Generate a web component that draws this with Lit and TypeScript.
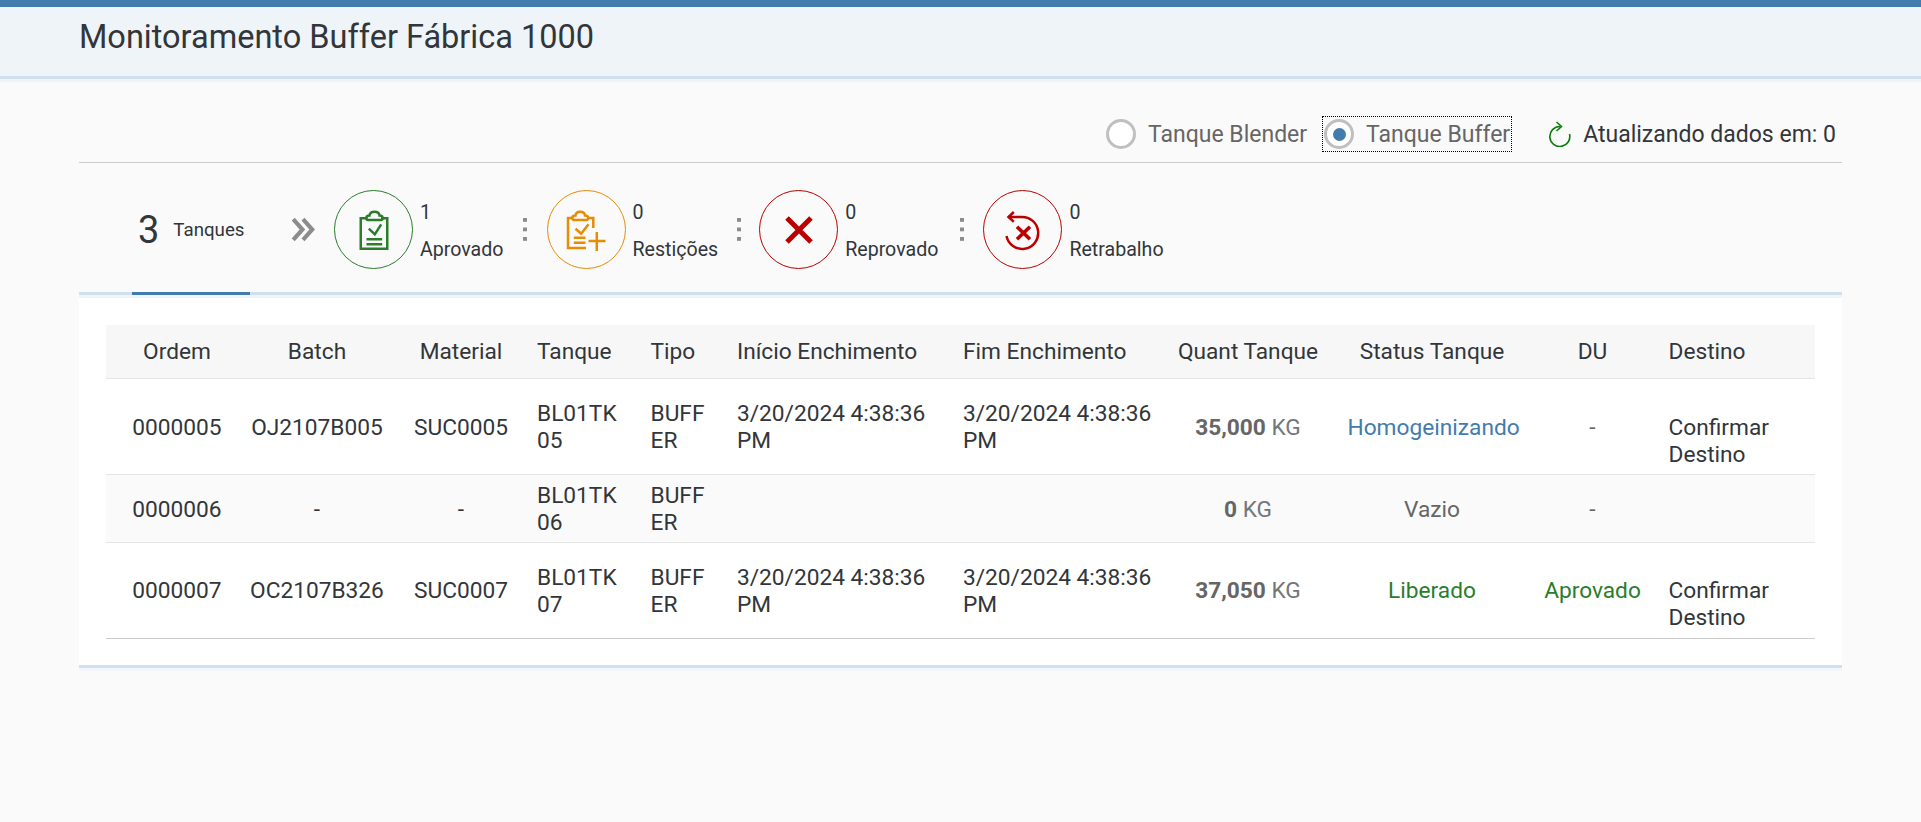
import { LitElement, html, css, svg } from 'lit';
import { customElement } from 'lit/decorators.js';

interface Row {
  ordem: string; batch: string; material: string; tanque: string; tipo: string;
  inicio: string; fim: string; quant: string; status: string; statusClass: string;
  du: string; duClass: string; destino: string;
}

const DATE = '3/20/2024 4:38:36 PM';

const ROWS: Row[] = [
  { ordem: '0000005', batch: 'OJ2107B005', material: 'SUC0005', tanque: 'BL01TK05', tipo: 'BUFFER', inicio: DATE, fim: DATE, quant: '35,000', status: 'Homogeinizando', statusClass: 'blue', du: '-', duClass: 'grey', destino: 'Confirmar Destino' },
  { ordem: '0000006', batch: '-', material: '-', tanque: 'BL01TK06', tipo: 'BUFFER', inicio: '', fim: '', quant: '0', status: 'Vazio', statusClass: 'grey', du: '-', duClass: 'grey', destino: '' },
  { ordem: '0000007', batch: 'OC2107B326', material: 'SUC0007', tanque: 'BL01TK07', tipo: 'BUFFER', inicio: DATE, fim: DATE, quant: '37,050', status: 'Liberado', statusClass: 'green', du: 'Aprovado', duClass: 'green', destino: 'Confirmar Destino' },
];

const CLIP = 'M16 12H29C31.500 12 31.500 7.500 27.500 7.500C27 2.500 18 2.500 17.500 7.500C13.500 7.500 13.500 12 16 12Z';

const ICONS = {
  aprovado: svg`
    <path d="M15.500 10.250H8.750V40.750H35.250V10.250H29" />
    <path d=${CLIP} />
    <path d="M16.800 20.700L22.800 26.300L29.200 16.300" />
    <path d="M14.500 31.300H30.200M14.500 36.300H30.200" />`,
  restricoes: svg`
    <path d="M9 10H4V40H22M24 10H29.300V20" />
    <path d="M10 12H22.500C25 12 25 7.500 21 7.500C20.500 2.500 12 2.500 11.500 7.500C7.500 7.500 7.500 12 10 12Z" />
    <path d="M11.500 20.700L17.200 25.700L24.500 16.300" />
    <path d="M9.800 29.700H21.500M9.800 34.700H21.500" />
    <path d="M24.500 33H41.500M32.800 24V43" />`,
  reprovado: svg`<path d="M3 3L27 27M27 3L3 27" />`,
  retrabalho: svg`
    <path d="M7.500 9H20A16 16 0 1 1 5.500 28" />
    <path d="M12.800 4L7.500 9L12.800 13.700" />
    <path class="thick" d="M16 18.700L29 31.300M29 18.700L16 31.300" />`,
};

@customElement('app-root')
export class AppRoot extends LitElement {
  static styles = css`
    :host {
      display: block;
      min-height: 822px;
      background: #fafafa;
      font-family: Roboto, "Noto Sans", sans-serif;
      color: #32363a;
    }

    /* ── Header ─────────────────────────────────────────── */
    .header {
      height: 69px;
      padding-left: 79px;
      background: #eff4f9;
      border-top: 7px solid #427cac;
      border-bottom: 3px solid #d1e0ee;
      box-shadow: 0 3px 0 #eff4f9;
      font-size: 32.500px;
      line-height: 61px;
    }

    /* ── Page ───────────────────────────────────────────── */
    .page {
      padding: 0 79px;
    }

    .toolbar {
      display: flex;
      align-items: center;
      justify-content: flex-end;
      height: 84px;
      padding-top: 27px;
      box-sizing: border-box;
      border-bottom: 1px solid #cccccc;
      font-size: 23px;
    }

    .radio {
      display: flex;
      align-items: center;
      height: 36px;
      box-sizing: border-box;
      padding: 0 1px 0 1px;
      border: 1px dotted transparent;
      color: #666666;
    }

    .radio.focused {
      border-color: #000000;
    }

    .radio-mark {
      width: 30px;
      height: 30px;
      box-sizing: border-box;
      margin-right: 12px;
      border: 3px solid #bfbfbf;
      border-radius: 50%;
      background: #ffffff;
      display: flex;
      align-items: center;
      justify-content: center;
    }

    .radio-mark i {
      width: 13px;
      height: 13px;
      border-radius: 50%;
      background: #427cac;
    }

    .radio-blender {
      margin-right: 13px;
    }

    .refresh {
      width: 23px;
      height: 26px;
      margin: 0 12px 0 36px;
      fill: none;
      stroke: #0a7d0a;
      stroke-width: 1.600;
    }

    .updating {
      margin-right: 6px;
    }

    /* ── Icon tab bar ───────────────────────────────────── */
    .tabs {
      display: flex;
      height: 129px;
      padding-left: 53px;
      border-bottom: 3px solid #d1e0ee;
    }

    .tab-total {
      position: relative;
      display: flex;
      align-items: center;
      width: 118px;
      height: 129px;
      padding-top: 4px;
      box-sizing: border-box;
    }

    .tab-total::after {
      content: '';
      position: absolute;
      left: 0;
      right: 0;
      bottom: -3px;
      height: 3px;
      background: #427cac;
    }

    .total-count {
      margin: 0 14px 0 6px;
      font-size: 38px;
    }

    .total-label {
      font-size: 18.700px;
    }

    .chevrons {
      width: 24px;
      height: 25px;
      margin: 54px 19px 0 41px;
      fill: none;
      stroke: #8c8c8c;
      stroke-width: 3.800;
    }

    .filter {
      display: flex;
      align-items: flex-start;
      padding-top: 27px;
    }

    .filter.reprovado {
      margin: 0 3px 0 -2px;
    }

    .filter.retrabalho {
      margin-left: -1px;
    }

    .circle {
      width: 79px;
      height: 79px;
      box-sizing: border-box;
      margin-right: 7px;
      border: 1px solid currentColor;
      border-radius: 50%;
      display: flex;
      align-items: center;
      justify-content: center;
    }

    .circle svg {
      width: 44px;
      height: 44px;
      fill: none;
      stroke: currentColor;
      stroke-width: 2.500;
    }

    .reprovado .circle svg {
      width: 30px;
      height: 30px;
      stroke-width: 5;
    }

    .circle svg .thick {
      stroke-width: 3.600;
    }

    .filter-text {
      padding-top: 11px;
      font-size: 19.600px;
      line-height: 24px;
    }

    .filter-count {
      margin-bottom: 13px;
    }

    .sep {
      width: 4px;
      height: 23px;
      margin: 55px 20px 0 19px;
      background: linear-gradient(#8c8c8c 4px, transparent 4px) 0 0 / 4px 9.500px;
    }

    /* ── Table ──────────────────────────────────────────── */
    .content {
      padding: 27px 27px 26px;
      background: #ffffff;
      border-top: 3px solid #eff4f9;
      border-bottom: 3px solid #d1e0ee;
      box-shadow: 0 3px 0 #f3f6fa;
    }

    table {
      width: 100%;
      border-collapse: separate;
      border-spacing: 0;
      table-layout: fixed;
      font-size: 22.700px;
      line-height: 27px;
    }

    col:nth-child(1) { width: 142px; }
    col:nth-child(2) { width: 138px; }
    col:nth-child(3) { width: 143px; }
    col:nth-child(4) { width: 113.500px; }
    col:nth-child(5) { width: 86.500px; }
    col:nth-child(6) { width: 226px; }
    col:nth-child(7) { width: 201.500px; }
    col:nth-child(8) { width: 183px; }
    col:nth-child(9) { width: 185px; }
    col:nth-child(10) { width: 136px; }

    th {
      height: 54px;
      box-sizing: border-box;
      padding: 0 8px;
      background: #f7f7f7;
      border-bottom: 1px solid #e5e5e5;
      font-weight: 400;
      text-align: left;
    }

    td {
      padding: 0 8px;
      border-bottom: 1px solid #e5e5e5;
      vertical-align: top;
      box-sizing: border-box;
    }

    tr.tall td {
      height: 96px;
      padding-top: 21px;
    }

    tr.short td {
      height: 68px;
      padding-top: 7px;
      background: #fafafa;
    }

    tbody tr:last-child td {
      border-bottom-color: #cccccc;
    }

    th.center,
    td.center {
      text-align: center;
    }

    tr.tall td.single {
      padding-top: 35px;
    }

    tbody tr:last-child td.single {
      padding-top: 34px;
    }

    tr.short td.single {
      padding-top: 21px;
    }

    td.batch {
      padding-left: 0;
      padding-right: 0;
    }

    th.material,
    td.material {
      padding-left: 15px;
    }

    .tanque,
    .tipo {
      word-break: break-all;
    }

    td.tanque {
      padding-right: 24px;
    }

    td.tipo {
      padding-right: 18px;
    }

    td.fim {
      padding-right: 2px;
    }

    .quant {
      color: #74777a;
    }

    .quant b {
      color: #666666;
      font-weight: 700;
    }

    .blue { color: #427cac; }
    .green { color: #2b7d2b; }
    .grey { color: #666666; }
  `;

  private _filter(key: keyof typeof ICONS, color: string, count: string, label: string, last = false) {
    const box = key === 'reprovado' ? 30 : 44;
    return html`
      <div class="filter ${key}">
        <div class="circle" style="color: ${color}">
          <svg viewBox="0 0 ${box} ${box}">${ICONS[key]}</svg>
        </div>
        <div class="filter-text">
          <div class="filter-count">${count}</div>
          <div>${label}</div>
        </div>
      </div>
      ${last ? '' : html`<div class="sep"></div>`}
    `;
  }

  render() {
    return html`
      <div class="header">Monitoramento Buffer Fábrica 1000</div>
      <div class="page">
        <div class="toolbar">
          <div class="radio radio-blender">
            <span class="radio-mark"></span>Tanque Blender
          </div>
          <div class="radio focused">
            <span class="radio-mark"><i></i></span>Tanque Buffer
          </div>
          <svg class="refresh" viewBox="0 0 23 26">
            <path d="M12 5.500A10 10 0 1 0 21.500 13" />
            <path d="M8.500 1L13.500 5.500L8.500 10" />
          </svg>
          <span class="updating">Atualizando dados em: 0</span>
        </div>
        <div class="tabs">
          <div class="tab-total">
            <span class="total-count">3</span>
            <span class="total-label">Tanques</span>
          </div>
          <svg class="chevrons" viewBox="0 0 22 23">
            <path d="M2 2L10.500 11.500L2 21M11 2L19.500 11.500L11 21" />
          </svg>
          ${this._filter('aprovado', '#2b7d2b', '1', 'Aprovado')}
          ${this._filter('restricoes', '#e78c07', '0', 'Restições')}
          ${this._filter('reprovado', '#bb0000', '0', 'Reprovado')}
          ${this._filter('retrabalho', '#bb0000', '0', 'Retrabalho', true)}
        </div>
        <div class="content">
          <table>
            <colgroup>
              <col /><col /><col /><col /><col /><col /><col /><col /><col /><col /><col />
            </colgroup>
            <thead>
              <tr>
                <th class="center">Ordem</th>
                <th class="center">Batch</th>
                <th class="center material">Material</th>
                <th>Tanque</th>
                <th>Tipo</th>
                <th>Início Enchimento</th>
                <th>Fim Enchimento</th>
                <th class="center">Quant Tanque</th>
                <th class="center">Status Tanque</th>
                <th class="center">DU</th>
                <th>Destino</th>
              </tr>
            </thead>
            <tbody>
              ${ROWS.map((r) => html`
                <tr class="${r.inicio ? 'tall' : 'short'}">
                  <td class="center single">${r.ordem}</td>
                  <td class="center single batch">${r.batch}</td>
                  <td class="center single material">${r.material}</td>
                  <td class="tanque">${r.tanque}</td>
                  <td class="tipo">${r.tipo}</td>
                  <td>${r.inicio}</td>
                  <td class="fim">${r.fim}</td>
                  <td class="center single quant"><b>${r.quant}</b> KG</td>
                  <td class="center single ${r.statusClass}">${r.status}</td>
                  <td class="center single ${r.duClass}">${r.du}</td>
                  <td class="single">${r.destino}</td>
                </tr>
              `)}
            </tbody>
          </table>
        </div>
      </div>
    `;
  }
}
